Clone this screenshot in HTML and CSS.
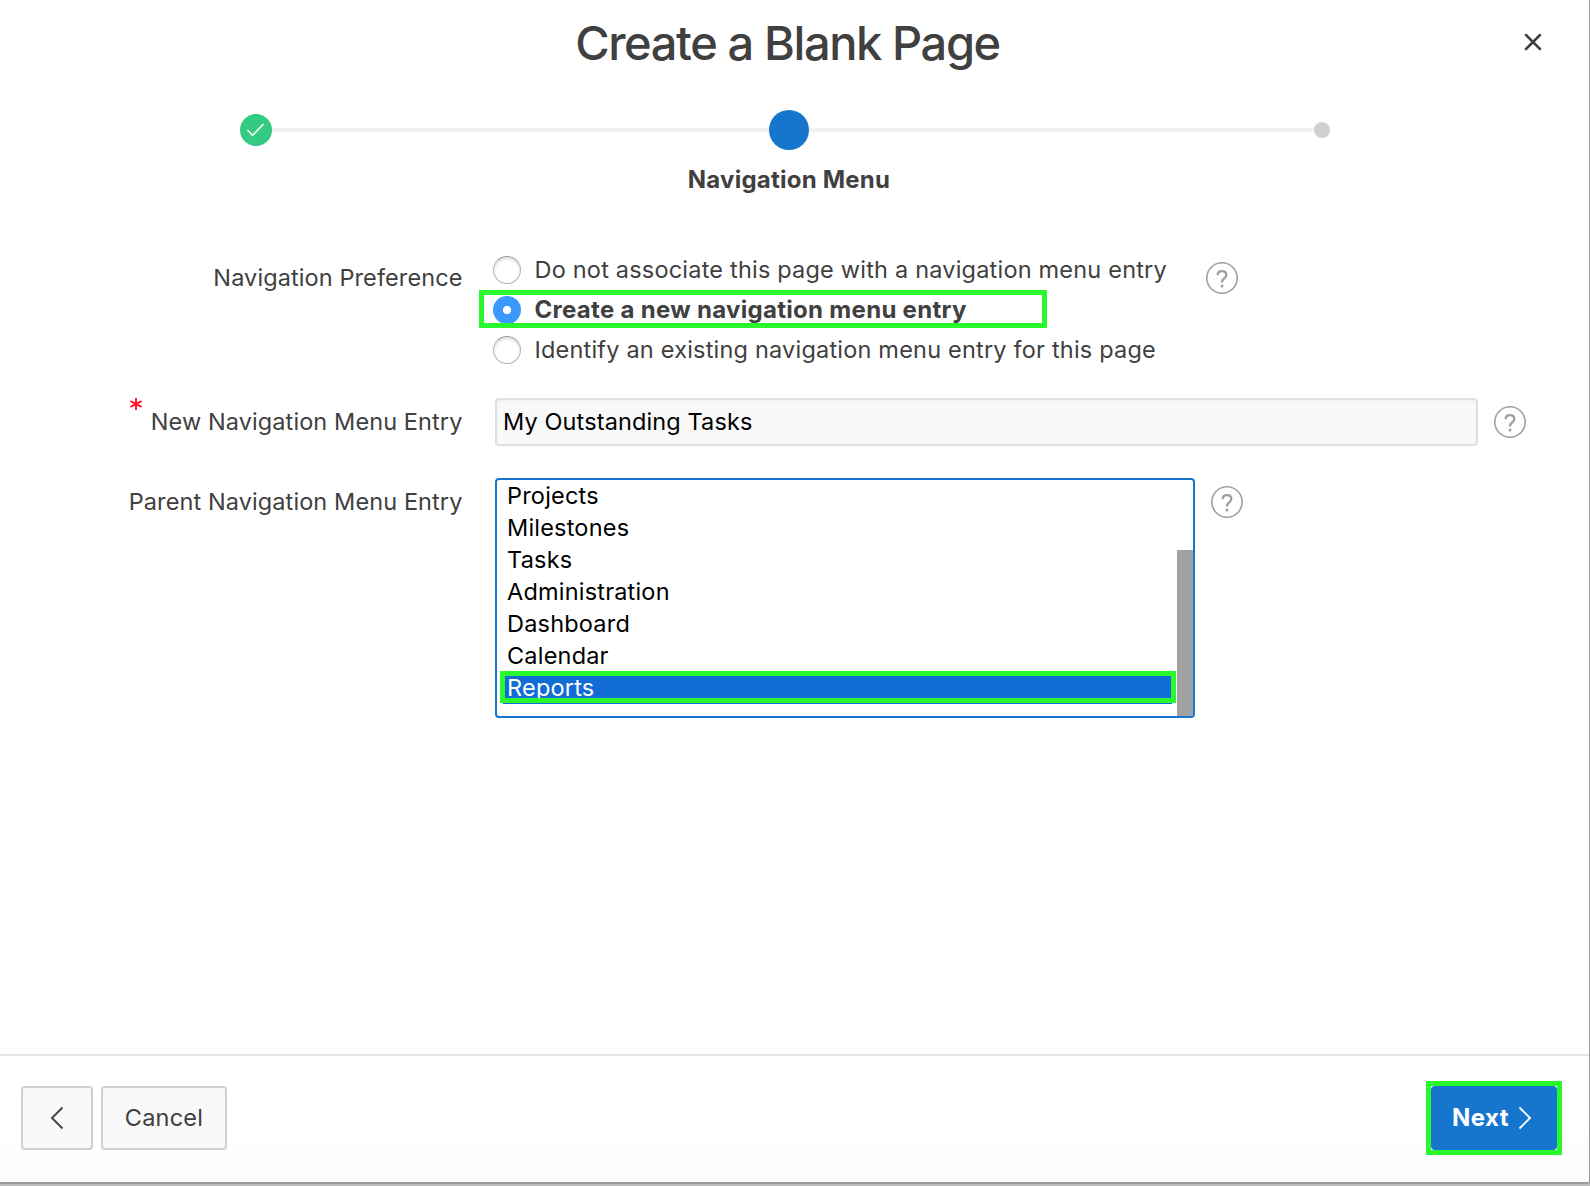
FILE: index.html
```html
<!DOCTYPE html>
<html lang="en">
<head>
<meta charset="utf-8">
<title>Create a Blank Page</title>
<link rel="stylesheet" href="styles.css">
</head>
<body>
<svg class="symbols" aria-hidden="true">
  <symbol id="help" viewBox="0 0 32 32">
    <circle cx="16" cy="16" r="15.2" fill="none" stroke="#9f9f9f" stroke-width="1.6"/>
    <path d="M11.6 13.2C11.6 10.6 13.5 9.2 16 9.2C18.5 9.2 20.3 10.7 20.3 12.9C20.3 16.3 16 16.4 16 19.9V20.5" fill="none" stroke="#9f9f9f" stroke-width="2.3"/>
    <circle cx="16" cy="24" r="1.5" fill="#9f9f9f"/>
  </symbol>
</svg>
<div class="dialog">
  <header class="header">
    <h1 class="title">Create a Blank Page</h1>
    <button class="close" aria-label="Close"><svg width="18" height="18" viewBox="0 0 18 18"><path d="M2 2L16 16M16 2L2 16" stroke="#404040" stroke-width="2.5" stroke-linecap="round"/></svg></button>
  </header>
  <div class="steps">
    <span class="step done"><svg width="32" height="32" viewBox="0 0 32 32"><path d="M7.5 16L12.6 21.3L23.5 10" fill="none" stroke="#fff" stroke-width="1.6"/></svg></span>
    <span class="line"></span>
    <span class="step current"></span>
    <span class="line"></span>
    <span class="step next"></span>
  </div>
  <div class="step-label">Navigation Menu</div>
  <main class="form">
    <div class="row preference">
      <div class="label">Navigation Preference</div>
      <div class="radios">
        <div class="radio"><i class="dot"></i><span>Do not associate this page with a navigation menu entry</span></div>
        <div class="radio selected"><i class="dot"></i><span>Create a new navigation menu entry</span><b class="mark"></b></div>
        <div class="radio"><i class="dot"></i><span>Identify an existing navigation menu entry for this page</span></div>
      </div>
      <svg class="help"><use href="#help"/></svg>
    </div>
    <div class="row entry">
      <div class="label"><svg class="required" width="12" height="12" viewBox="0 0 12 12"><path d="M6 0V12M.5 3.2L11.5 8.8M11.5 3.2L.5 8.8" stroke="#ff0f1f" stroke-width="1.9"/></svg><span>New Navigation Menu Entry</span></div>
      <div class="input"><span>My Outstanding Tasks</span></div>
      <svg class="help"><use href="#help"/></svg>
    </div>
    <div class="row parent">
      <div class="label">Parent Navigation Menu Entry</div>
      <div class="listbox">
        <ul class="options">
          <li>Projects</li><li>Milestones</li><li>Tasks</li><li>Administration</li><li>Dashboard</li><li>Calendar</li>
          <li class="active">Reports<b class="mark"></b></li>
        </ul>
        <div class="scrollbar"></div>
      </div>
      <svg class="help"><use href="#help"/></svg>
    </div>
  </main>
  <footer class="footer">
    <button class="btn back" aria-label="Back"><svg width="14" height="24" viewBox="0 0 14 24"><path d="M12.5 1.5L2 12L12.5 22.5" fill="none" stroke="#404040" stroke-width="1.9"/></svg></button>
    <button class="btn cancel"><span>Cancel</span></button>
    <button class="btn primary"><span>Next</span><svg width="14" height="24" viewBox="0 0 14 24"><path d="M1.5 1.5L12 12L1.5 22.5" fill="none" stroke="#fff" stroke-width="1.9"/></svg><b class="mark"></b></button>
  </footer>
</div>
</body>
</html>
```
FILE: styles.css
```css
* { box-sizing: border-box; }
body {
  margin: 0;
  width: 1590px;
  height: 1186px;
  overflow: hidden;
  background: #bdbdbd;
  color: #404040;
  font: 400 23.5px/32px Inter, "Liberation Sans", sans-serif;
  letter-spacing: .2px;
}
.symbols { display: none; }
svg { display: block; }
button { font: inherit; letter-spacing: inherit; color: inherit; margin: 0; padding: 0; border: 0; background: none; }
.dialog {
  display: flex;
  flex-direction: column;
  height: 1184px;
  background: #fff;
  border-right: 1px solid #999;
  border-bottom: 2px solid #9b9b9b;
  border-bottom-right-radius: 4px;
}
.header {
  display: grid;
  grid-template-columns: 1fr auto 1fr;
  align-items: center;
  height: 84px;
  padding-right: 12px;
}
.title { grid-column: 2; margin: 0; padding: 2px 2px 0 0; font-size: 47px; line-height: 56px; font-weight: 500; letter-spacing: -1.4px; white-space: nowrap; }
.close { justify-self: end; margin-right: 35px; }
.steps { display: flex; align-items: center; height: 40px; margin: 26px 259px 0 240px; }
.line { flex: 1; height: 4px; background: #f0f0f0; }
.step { flex: none; border-radius: 50%; }
.done { width: 32px; height: 32px; background: #34ca81; }
.current { width: 40px; height: 40px; background: #1675cd; }
.next { width: 16px; height: 16px; background: #d0d0d0; }
.done + .line { flex: 0 0 497px; }
.step-label { margin-top: 14px; padding-right: 11px; text-align: center; font-size: 24px; font-weight: 700; letter-spacing: .22px; }
.form { display: flex; flex-direction: column; margin-top: 54px; }
.row { display: flex; align-items: flex-start; white-space: nowrap; }
.label { display: flex; flex: none; width: 462.5px; margin-right: -.5px; justify-content: flex-end; letter-spacing: .1px; }
.help { flex: none; width: 32px; height: 32px; }
.preference { height: 120px; }
.preference .label { margin-top: 12px; }
.preference .help { margin: 12px 0 0 38px; }
.radios { width: 674.5px; margin-left: 31px; }
.radio { position: relative; display: flex; align-items: center; height: 40px; gap: 13.5px; }
.dot { width: 28px; height: 28px; border-radius: 50%; border: 1px solid #b4b4b4; border-top-color: #999; background: #fff; box-shadow: inset 0 2px 3px #ddd; }
.selected { font-size: 24px; font-weight: 700; letter-spacing: .3px; }
.selected .dot { border: 0; box-shadow: none; background: radial-gradient(circle, #fff 3.7px, #3b99fc 4.5px); }
.mark { position: absolute; border: 5px solid #29f82d; }
.selected .mark { left: -14px; top: 0; width: 568px; height: 38px; }
.entry { margin-top: 28px; align-items: center; height: 48px; }
.required { margin: -8px 9px 0 0; }
.input { display: flex; align-items: center; width: 983px; height: 48px; margin: 0 16px 0 33px; padding-left: 6px; border: 2px solid #dfdfdf; border-radius: 4px; background: #f9f9f9; box-shadow: inset 0 2px 3px #f0f0f0; color: #000; letter-spacing: .12px; }
.parent { margin-top: 32px; }
.parent .label, .parent .help { margin-top: 8px; }
.listbox { display: flex; align-items: flex-end; width: 700px; height: 240px; margin: 0 15.5px 0 33px; border: 2px solid #1675cd; border-radius: 4px; overflow: hidden; }
.options { flex: 1; align-self: flex-start; margin: 0 5px 0 6px; padding: 0; list-style: none; color: #000; }
.options li { height: 32px; padding-left: 4px; }
.options .active { position: relative; background: #116cd6; color: #fff; }
.active .mark { left: -3.5px; right: -3.5px; top: -1px; height: 32px; }
.scrollbar { width: 16px; height: 166px; background: #a1a1a1; }
.footer { display: flex; align-items: center; gap: 8px; height: 128px; margin-top: auto; padding: 0 32px 2px 21px; border-top: 2px solid #e5e5e5; background: linear-gradient(#fff 60%, #fcfcfc); }
.btn { position: relative; display: flex; align-items: center; justify-content: center; height: 64px; border: 2px solid #d0d0d0; border-radius: 4px; background: #f9f9f9; }
.back { width: 72px; }
.cancel { width: 126px; }
.primary { width: 126px; margin-left: auto; padding-right: 4px; gap: 9px; border: 0; background: #1675cd; color: #fff; font-size: 24px; font-weight: 700; letter-spacing: .4px; }
.primary .mark { inset: -5px; }
```
